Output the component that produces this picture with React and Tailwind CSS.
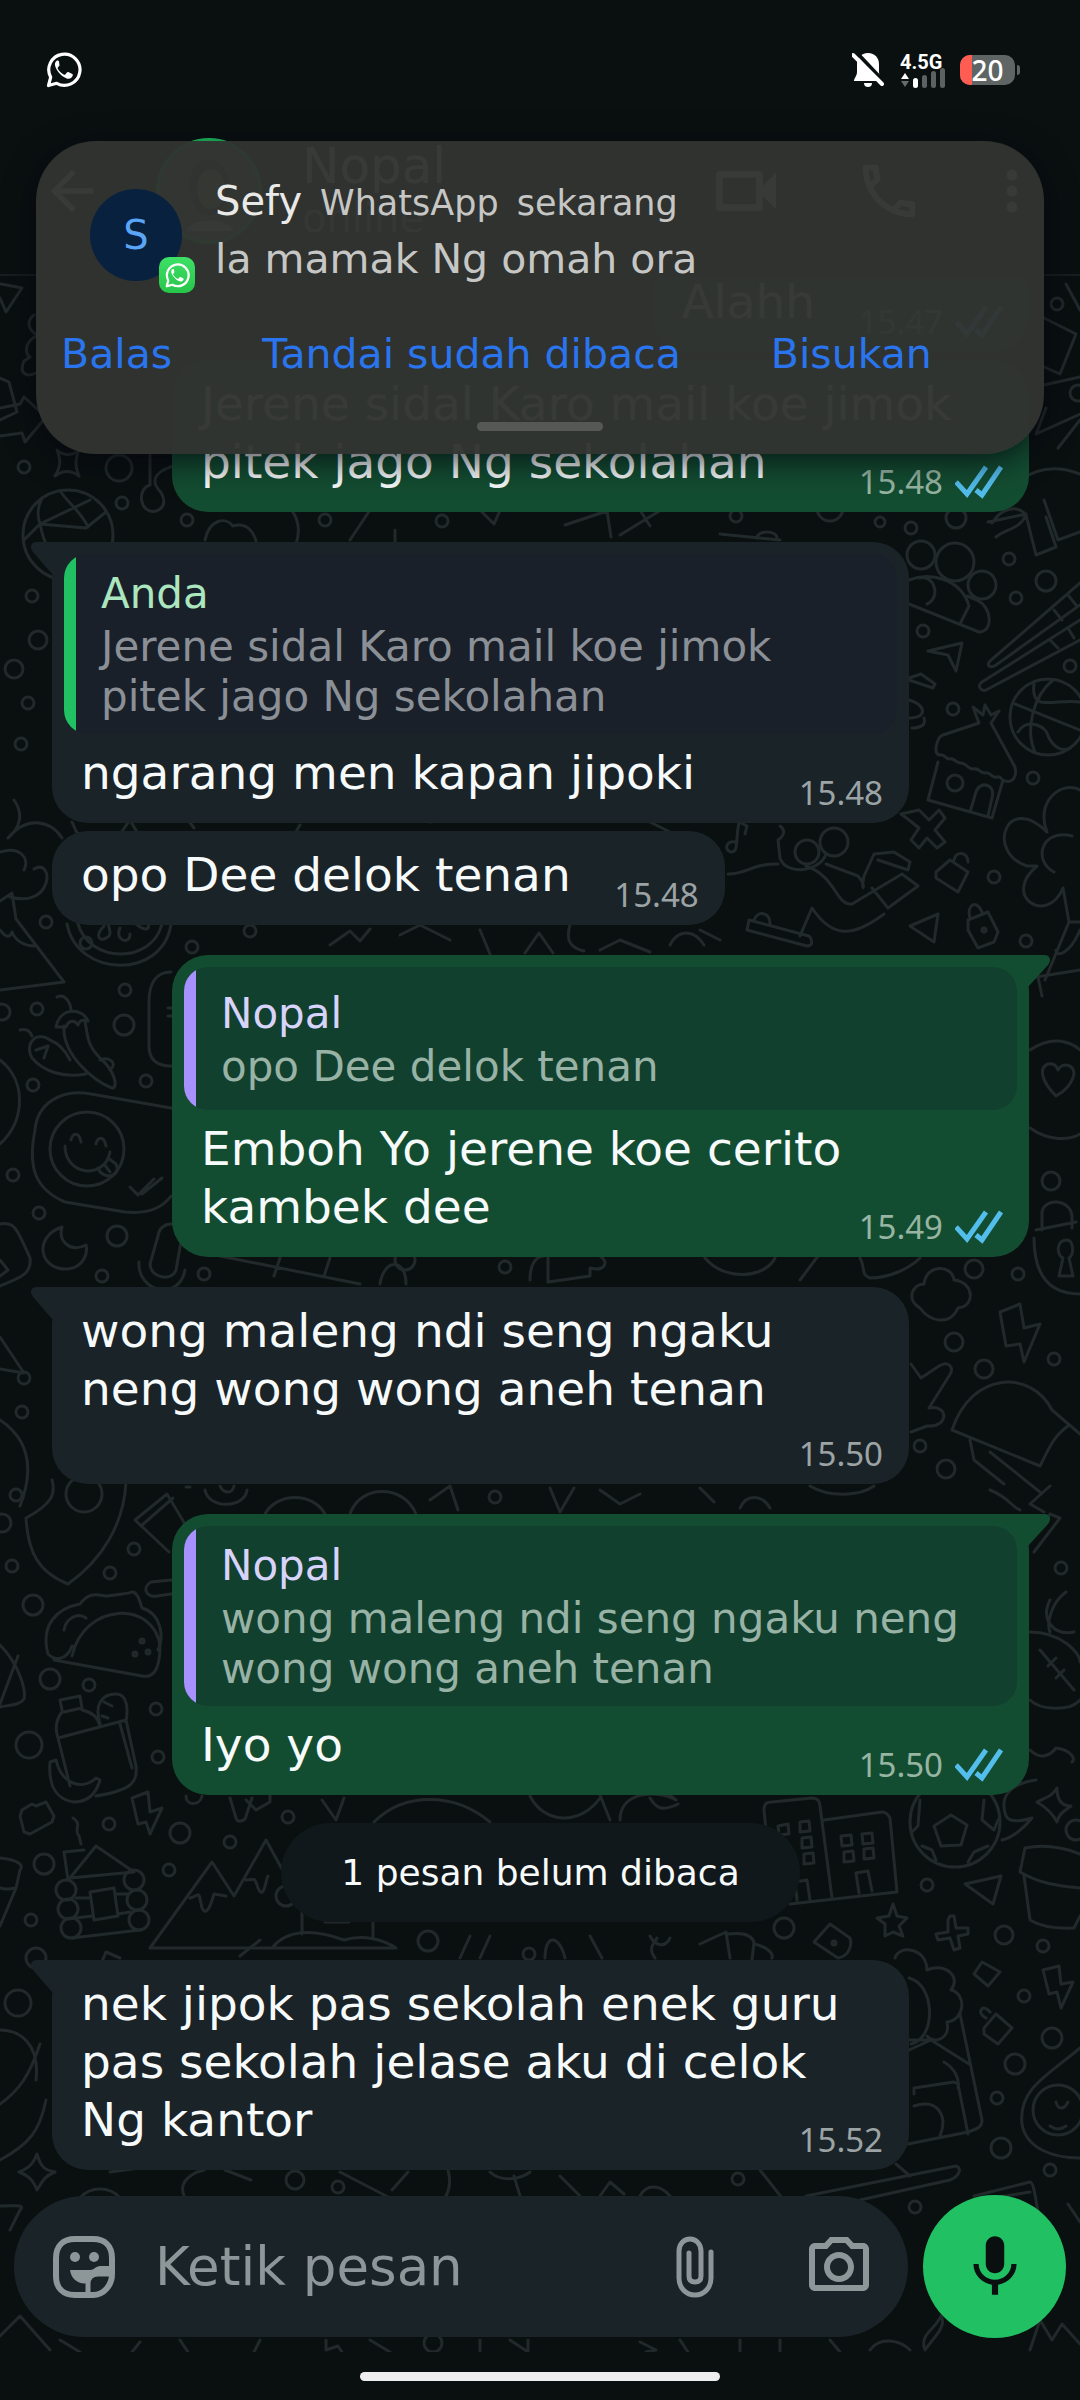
import React, { useState } from "react";
import { MdOutlinePhotoCamera, MdMic, MdOutlineVideocam, MdOutlineCall, MdMoreVert, MdArrowBack } from "react-icons/md";

// small bubbles scattered over the wallpaper: x, y, radius
const dots = [
  [24, 467, 6], [119, 468, 13], [122, 503, 6], [187, 520, 6], [325, 520, 6], [442, 521, 6], [1057, 304, 6], [1078, 393, 8],
  [736, 516, 6], [830, 508, 13], [880, 522, 5], [911, 528, 6], [956, 518, 10], [921, 555, 14], [955, 562, 19], [982, 585, 14],
  [1009, 559, 6], [1046, 581, 10], [1016, 598, 6], [923, 631, 6], [953, 709, 6], [1070, 666, 6], [955, 783, 8], [1033, 778, 6],
  [994, 877, 6], [1026, 941, 6], [807, 852, 12], [32, 596, 6], [38, 640, 9], [14, 669, 9], [28, 703, 6], [21, 744, 6],
  [46, 922, 6], [86, 943, 6], [125, 990, 6], [124, 1025, 10], [37, 1009, 6], [2, 1012, 8], [33, 1085, 6], [146, 1081, 6],
  [13, 1175, 6], [39, 1213, 6], [117, 1236, 10], [102, 1276, 6], [204, 1274, 6], [192, 947, 6], [250, 931, 6], [505, 1267, 6],
  [1051, 1181, 9], [974, 1269, 9], [1018, 1274, 6], [954, 1342, 9], [1054, 1359, 6], [984, 1369, 9], [920, 1446, 6], [946, 1469, 9],
  [24, 1378, 6], [22, 1412, 6], [16, 1495, 6], [2, 1523, 9], [12, 1566, 6], [84, 1494, 18], [134, 1549, 6], [110, 1573, 6],
  [33, 1605, 10], [50, 1679, 10], [89, 1685, 6], [29, 1745, 13], [156, 1709, 6], [158, 1757, 6], [109, 1824, 6], [180, 1833, 10],
  [230, 1842, 6], [288, 1817, 6], [44, 1864, 10], [169, 1870, 6], [31, 1920, 6], [286, 1896, 10], [1061, 1568, 6], [495, 1497, 6],
  [927, 1885, 6], [784, 1928, 10], [1004, 1935, 9], [1043, 1946, 6], [1024, 1996, 6], [1052, 2038, 10], [1015, 2064, 10],
  [997, 2098, 6], [1001, 2148, 10], [1050, 2170, 6], [738, 2179, 6], [915, 2207, 6], [1076, 1830, 10], [18, 2003, 13],
  [295, 2180, 9], [338, 2187, 6], [428, 1941, 10], [529, 1954, 6], [433, 2343, 9], [405, 1260, 10], [36, 1958, 10],
  // ends of the logs of the cabin
  [66, 1890, 10], [68, 1909, 10], [71, 1928, 10], [134, 1880, 10], [137, 1900, 10], [139, 1920, 10],
];

function Wallpaper() {
  return (
    <svg
      aria-hidden="true"
      viewBox="0 276 1080 2076"
      preserveAspectRatio="xMidYMin slice"
      className="absolute inset-0 h-full w-full"
      fill="none"
      stroke="#22292a"
      strokeWidth="3"
      strokeLinecap="round"
      strokeLinejoin="round"
    >
      {dots.map(([x, y, r]) => (
        <circle key={`${x}-${y}`} cx={x} cy={y} r={r} />
      ))}
      {/* paper planes, stars and cups near the top */}
      <path d="M-4 283l26 5-16 24-6-14M34 315c-8 6-6 16 4 20-16 8-12 20-8 22l-6 4c-6 14 4 16 12 12M0 378l9 4 8 30-17 8M0 408l20-4 4-7 22 20-21 25-3-9-22 3M57 450c6 6 16 6 22 0-4 10-4 16 0 26-8-6-16-6-24 0 6-10 6-16 2-26z" />
      <path d="M150 455v30c-14 4-10 30 6 26 12-4 8-16 2-22-8-10 0-20 20-24" />
      <circle cx="68" cy="535" r="45" />
      <path d="M42 498c-6 12-4 20-2 26l50-24M24 540l16-16 46 4 20-16M60 491c10 14 22 22 28 36M40 524c4 20 10 30 20 40" />
      <path d="M205 540c4-20 20-24 28-14 14-4 22 6 24 20M290 508c10 12 10 24 6 36M350 540l20-30M480 510l14 14 8-18M395 530v20M620 535l46-28M565 525l42-14 4 26M640 510l10 16M720 534l60 6M757 538c0-8 20-8 20 0" />
      <path d="M1066 284l14 26M1044 318l32 16-16 40-18-8M1044 385l36-8M1046 408l-10 26 44-20M1058 448l22-28M1020 480c20-14 40-14 60-6M992 523c10-16 26-18 34-8-6 14-20 14-30 22M988 522l38-8M1026 515l10 40 20-8-10-30M1044 500l14 40 22-8" />
      {/* whisk, hut and ball */}
      <path d="M909 580c20-8 52-2 60 26M909 604l70 28c14 0 14-24-2-32l-10-4M969 606l-8 16M919 578c16-4 22 20 8 26M1080 583l-90 78c-4 4 0 8 6 4l84-60M1080 620l-98 62c-6 4 0 10 4 8l94-50M1054 610l8 10M1068 595l8 10M1050 640l8 8M1068 628l6 10" />
      <path d="M928 651l34-8-6 28-8-16zM909 678l12-4 14 10-2 4-24-8M909 700c16 4 20 18 0 18M912 728c10 0 14-4 12-10" />
      <path d="M979 723l-6-16 10 8 2-10 6 10 8-4-8 12 24 44c2 10-2 16-10 14-4 0-4-6-8-4-6 2-6-6-12-4-6 0-6-6-12-4-6 0-6-6-12-6-6 0-6-6-12-4-4 0-4-6-10-4-6-2-2-18 4-20zM938 762l-10 38 64 18 11-38M970 812l6-20c4-12 20-8 16 6l-4 18" />
      <circle cx="1048" cy="717" r="38" />
      <path d="M1015 704l65 26M1053 680c-20 16-28 50-18 72M1034 684c-4 30 22 14 46 18M1018 732c10-16 30-4 30 4 6 12 14 16 22 12" />
      <path d="M909 820l-8-6 18-4 10 10 10-10 6 8-10 12 10 12-8 6-10-10-8 10-8-8 8-12-10-8M735 842c-8-2-12 8-4 10 8 0 4-10 8-30l8 4-2 8M780 826c6 4 4 10-2 14l2 18c6 18 40 14 46-4M728 874c20 0 22-10 50-10M826 864l32 12c10 10 2 20 6 0l10-22 20-2 16 10-2 8-30-10M806 866c30 10 30 40 46 38l50-30 16 12-30 22-16-20M800 936l12-28c20 30 40 30 72 6M747 930l60 16c6 0 6-6 2-10l-60-16zM754 920c4-10 16-8 16 4" />
      <circle cx="834" cy="842" r="14" />
      <path d="M936 872l14-12 18 12-10 20-22-14zM954 860c2-10 14-8 14 2M910 926l28-12-4 28zM968 920l20-8 10 20-4 10-16 6-10-18zM970 918c-4-12 6-20 12-6" />
      <circle cx="984" cy="930" r="2" />
      <path d="M1047 832c-40-40-62 20-20 34l10 0c-36 30 10 60 26 22M1047 832c-12-30 14-52 33-42M1072 836c-30-8-40 24-18 36M1063 888l6 34-24 58M1069 922h11M1056 950c0 8 14 4 24-20" />
      {/* left side: flower, citrus, pizza, chillies */}
      <path d="M14 800c10 14 6 28-6 38 20-24 44-16 54 0M0 852c20-6 30 6 24 18M34 869c20-12 20 40-24 28M0 901l12-8 4 26M16 919l48 63-64 8M0 930c6 8 10 8 12 2 4 10 14 14 22 14" />
      <path d="M67 924c10 54 96 56 104 0M78 924c12 40 74 40 84 0M104 926c-10 10-4 16 2 12 6-2 4-8 2-14M120 928c-6 12 10 18 10 6M136 924c10 8 14 6 12-2" />
      <path d="M57 997c8-4 14 6 14 14M56 1027c4-20 26-20 32-6-8-2-8 0-10 4-4-6-10-4-12 2zM64 1026c-2 30 32 56 48 62 6 0 4-16-12-30-14-14-12-24-15-36M20 1030c8-2 10 2 12 6M50 1040c-14-10-26 4-18 18 12 14 32 20 54 16M50 1040c10 4 16 12 20 20M36 1050l12-4-4 12M100 1060c10-4 18 4 10 10" />
      <path d="M171 972c-14 0-22 10-22 30v44c0 14 8 20 22 20M168 1008h4M168 1016h4" />
      <circle cx="87" cy="1149" r="37" />
      <path d="M171 1108l-80-14c-30-6-54 10-56 36-8 40 2 60 30 72l60 10c20 2 36-2 46-16M71 1140c2-8 8-8 10 2M96 1144c2-8 8-8 10 2M65 1146c0 30 40 34 45 6M98 1168c4 12 24 10 18-4l-8-6M104 1164l6 8M130 1187l8 8 16-16M142 1194l20-16" />
      <path d="M62 1227c-30 10-22 44 6 42 16-2 20-16 18-24-16 8-28-4-24-18zM0 1224c14-2 16 2 30 34 2 16-10 20-30 28M0 1260l8 10-8 6M158 1236c2-16 24-16 24 0l-6 34c-4 12-26 8-26-6zM139 1262c-2 30 40 40 46 8M0 1060c26 20 26 60 0 84" />
      {/* between the bubbles */}
      <path d="M72 822c4 8 4 12 8 12M120 834l10-14 8 14M188 820l6 8M300 825l-6 10M430 822l60-8M515 835h60M650 822l20 10M330 945l20-14 10 10 10-12M400 935l20-10 30 15M480 930l10 24M525 953l14-20 14 20M570 925c-6 20 6 24 14 26M600 950l20-10 30 12M670 945c8-16 24-16 34 0M700 930l20 10" />
      <path d="M220 1256l140 28M280 1258l-6 18M330 1258l-6 18M380 1284c4-26 26-26 26 0M530 1280c0-16 6-24 14-24M548 1258v24l42-6v-8c14 4 20-6 10-12M705 1258c20 24 60 20 70 0M800 1280l18-24M860 1258c6 10 0 16 10 20 20 0 40-10 50-20" />
      <path d="M190 1487l-4 0M205 1490c4 20 40 18 42 0M220 1486c4 8 12 8 14 0M265 1514c12-22 48-22 60 0M350 1514c10-30 54-30 66 0M430 1500l20-14 8 24M550 1488l10 24 14-24M600 1490l20 14 20-10M700 1488l14 14M740 1508c6-14 22-14 30 0M810 1486c20 12 50 10 64 0" />
      {/* right side: heart, lock, cloud, bolt, mushroom */}
      <path d="M1030 1050c30-20 50 0 50 0M1030 1128c20 14 40 12 50 6M1056 1096c-14-14-18-28-8-32 8-2 10 6 10 6 4-8 16-6 16 4-2 10-10 18-18 22zM1042 1230v-18c2-14 28-14 30 4v12M1036 1230l40-8M1034 1238c0 30 10 56 46 56" />
      <path d="M1030 978l50-8M1034 958l8 38M1067 1240c-12 0-10 16-4 18l-4 18h14l-4-18c6-4 4-18-2-18" />
      <path d="M920 1308c-14-8-8-24 4-24 2-20 28-20 30-4 20 2 22 26 4 28-8 18-28 14-38 0zM1000 1312l20-8 4 24 16-4-16 38-4-18-14 2zM911 1364l10 14 18-12c10-6 16 2 10 10l-20 32c20-4 20 20-2 18l-16 6M952 1430c20-60 80-60 100-20l28 24M952 1430l88 36c10-20 14-30 28-40M970 1440l4 20 30 24M990 1452l50 40" />
      <path d="M0 1337l24 36-24-4M0 1420c30 20 34 50 20 86M52 1480c4 14 0 24-26 38 2 34 12 54 42 66 34-24 56-60 58-102M135 1520l32-26 18 30M135 1520l34 32M141 1526l32-28" />
      <path d="M171 1580l-20 2c-10 6-4 16 6 14l14-2M48 1654c-8-30 10-46 32-50 10-14 20-8 28-8 10-2 20-2 24-4 6 0 8 10 10 16 20 6 22 30 16 42M54 1660l88 16c10 2 18-4 18-30-6-46-76-44-88 10M48 1654c6 6 18 8 24-8M64 1630c2-12 14-18 22-12" />
      <circle cx="142" cy="1641" r="2" /><circle cx="135" cy="1654" r="2" /><circle cx="148" cy="1652" r="2" />
      <path d="M0 1645c20 20 26 46 24 54-4 6-14 6-24 8M0 1704l18-48M62 1710l-2-10 20-4 2 12-18 4M62 1712c-8 10-6 20-4 26l12 48M82 1710c10 2 16 8 18 16M58 1738l68-18 10 46c2 16-4 24-40 30M120 1724l12 44M100 1724c-6-20 2-30 16-30 12 0 12 16 10 28M104 1702l8 4M102 1716l6 2M50 1762l6-2c6 26 28 30 40 18l4 2c-4 14-12 22-26 22-16-2-26-14-24-40z" />
      <path d="M132 1798l16-6 2 20 12-4-12 26-4-12-8 2zM20 1816l2-6 10-6 4 2 10-4 8 14-2 6-22 12-6-2zM73 1818c10 6 0 12 6 18l2 8M68 1880l-4-28 20-2M70 1878l26-32 38 26zM76 1898h14M76 1918l16-2M116 1894h12M118 1914l12-2M90 1892l24-4 4 28-24 4zM72 1938l68-8M0 1858c20 2 24 8 20 12l-4 18c-10 2-16 0-16 0M16 1888l-16 38" />
      <path d="M150 1948l62-86 22 34 32-56 22 40M190 1898c10-2 8-10 12 10 4 8 8 0 12-14l12 2M246 1880c10 0 8-4 12 8 6 14 8-10 10-12M150 1948h246M272 1948c14-18 40-20 72-8 20-6 40 0 52 8M302 1910v24M373 1920v18M325 1922h24" />
      <path d="M186 1796c0 10 14 10 16 0M230 1798l6 20c2 6 10 2 10-2l6-18M246 1800l10 10 14-8v-8M322 1800l14 20 8-22M374 1822c30-30 80-30 116 0M530 1796c14 28 50 30 70 2M610 1820l-12-30M620 1820c0-30 40-30 56-20l-10-8M650 1798c6 10 12 14 28 6" />
      {/* buildings and football */}
      <path d="M766 1830l-2-20c0-6 2-8 8-8l40-4c6 0 8 4 8 8l12 92M824 1820l58-8c4 0 6 2 8 6l7 74-107 12M778 1826l10-2 1 10-10 1zM800 1822l9-1 1 10-10 1zM802 1838l9-1 1 10-10 1zM804 1854l9-1 1 10-10 1zM841 1836l10-1 1 10-10 1zM862 1834l10-1 1 10-10 1zM844 1852l9-1 1 10-10 1zM864 1849l9-1 1 10-10 1zM859 1893l-3-20 12-2 4 20M797 1900l-2-18 12-2 3 20" />
      <circle cx="955" cy="1822" r="45" />
      <path d="M951 1815l16 10-6 20-20 1-7-20zM920 1800l-2 26-6 6M984 1800l-2 20 12 10 4-10M922 1846l10 4 4 10M988 1846l-14 6-6 10" />
      <path d="M1036 1780c-30 4-36 20-30 36 4 8 20 4 26 2-8 10-20 20-30 22M1037 1802c6-4 14-4 20-14 0 14 6 18 14 18-8 6-12 8-14 16-4-8-10-14-20-20zM1030 1750c10 10 20 6 26-2 16 2 20 12 16 14M1025 1848c20-4 40 0 55 6M1025 1848l-5 24c20 12 40 14 60 16M1024 1876l6 44c16 10 40 8 44 8l6-12M965 1884l36-8-8 28z" />
      <path d="M893 1904l4 12 10 2-8 8 4 10-10-4-8 4 0-12-8-6 12-2zM948 1920l2-4 4 0 2 12 12 0 0 6-10 2 2 12-6 2-4-12-12 2-2-6 12-2zM830 1924l-16 18 24 16c12-2 14-14 12-20z" />
      <circle cx="834" cy="1943" r="2" />
      <path d="M700 1944l26-12 4 26M728 1934c16-2 24 2 26 8l-2 18M754 1944c10 2 20 8 18 14M895 1958c4-14 32-10 32 12 20-8 34 8 24 20 16 4 14 30-4 32 4 18-14 22-20 14M909 1978c26 6 28 60 2 66M909 2050l22-10 38 24M931 2040l-22 0M960 2014l22 106c0 6-2 8-14 12l-60 12M914 2094v-6l40-6 4 2 10 50M914 2106c24-8 34 10 26 30M944 2062c10 6 16 16 14 26" />
      <path d="M982 1962l18 10-12 14-14-12zM1043 1970l16-4 2 18 12-2-12 26-4-16-8 2zM984 2028l12-14 16 14-14 16-14-10zM986 2018c-10-4-4-16 4-6M1080 2048c-30 26-62 40-58 76 4 24 30 34 58 34" />
      <circle cx="1058" cy="2110" r="25" />
      <path d="M1050 2126c6 4 10 4 16 0M1056 2102c2 8 8 8 12 0" />
      <path d="M760 2170l22 28M896 2164l14 12M806 2196l150-30c6 2 4 10-6 14l-90 20M974 2196l56-14c4 0 6 20 8 30M980 2200l50-8M1068 2204l12 18M0 2104c20-14 30-30 40-60M0 2030c20 0 40 14 36 50M0 2160c30-16 40-30 46-60M37 2154c4 14 8 16 18 18-10 4-12 8-18 18-4-10-8-14-18-18 10-4 14-8 18-18zM0 2206c14 0 26-2 20 4l-10 20" />
      <path d="M110 2172l30-4M184 2196c-8-20 20-26 20-26M225 2170l26 10M340 2172l50 26M392 2190l16-18M448 2170c4 14 0 22-2 26M490 2172c10 10 30 8 40 0M520 2196l-6-20M560 2176l20 20M600 2196l10-14 14 12M640 2196c6-12 20-12 30 0M80 2198c10-12 30-12 40 0" />
      <path d="M0 2336l20-20 30 34M60 2340l20 12M140 2342l-8 10M180 2340l8 12M260 2340l-6 12M326 2340v10l12-4 4 6M370 2340l20 12M480 2340v12M510 2340l18 12v-12M640 2342l16 8-10 2M680 2340l8 12M740 2340v12M780 2340v12M830 2340l10 12M870 2350c10-14 30-10 40 0M925 2350c-6-16 10-20 16-34 6 10-6 20-16 34M1030 2350l10-30 12 20 10-16 18 20" />
      <path d="M1050 1600c-10 20 4 36 24 32M1066 1592c-14 10-20 30-16 40M1030 1632c30 0 50 20 50 30M1030 1700c10 10 40 12 50 0M1040 1650l34 40M1048 1666l8-8M1056 1678l8-8M1030 1540l20-26 10 4-26 34M990 1490c20 8 20 16 30 20M1050 1486l-20 18 14 8" />
      <path d="M100 1966l6-14 14 6M240 1956l20-16M460 1958l10-22M480 1958l10-22M545 1958c0-24 14-24 20 0M590 1936l12 22M650 1936c4 8 14 14 20 2M655 1958c-8-10 0-16 2-20" />
    </svg>
  );
}

function Ticks() {
  return (
    <svg viewBox="0 0 48 34" className="h-[34px] w-12 shrink-0" fill="none" stroke="#53bdeb" strokeWidth="5" aria-label="Dibaca">
      <path d="M1 17l11 12L31 2M21 25l6 5L46 2" />
    </svg>
  );
}

function WhatsAppGlyph({ className }) {
  return (
    <svg viewBox="0 0 36 36" className={className} fill="none" aria-hidden="true">
      <path d="M2.500 33.500l2.200-8.300A15.600 15.600 0 1 1 10.700 31.300z" stroke="currentColor" strokeWidth="3.200" strokeLinejoin="round" />
      <path
        fill="currentColor"
        d="M13 9.500c-.5-1-1.300-1-2-.9-2.200 1.200-2.500 4-1.600 6.200 2 5.200 6.100 9.600 11.300 11.600 2.700.9 5-.2 5.900-2.300.3-1.100.3-1.700-.3-2l-4-2c-.6-.2-1 0-1.400.4l-1.600 2c-.4.4-.8.4-1.200.2-2.900-1.400-5-3.500-6.400-6.200-.2-.5 0-.9.300-1.200l1.300-1.600c.3-.4.3-.8.100-1.300z"
      />
    </svg>
  );
}

function Tail({ sent }) {
  return sent ? (
    <svg viewBox="0 0 60 36" className="absolute top-0 -right-[21px] h-9 w-[60px] text-[#134d31]" fill="currentColor" aria-hidden="true">
      <path d="M0 0h54c6 0 8 5 4 10L38 32 30 36H0z" />
    </svg>
  ) : (
    <svg viewBox="0 0 60 36" className="absolute top-0 -left-[21px] h-9 w-[60px] text-[#1a2328]" fill="currentColor" aria-hidden="true">
      <path d="M60 0H6C0 0-2 5 2 10l19 22 9 4h30z" />
    </svg>
  );
}

function Bubble({ sent, tail, fit, below, quote, text, time }) {
  // the time shares the last line of the text, unless that line is too long for it
  const textSpace = below ? "pb-4" : `pb-[21px] [grid-area:1/1] ${fit ? (sent ? "pr-[188px]" : "pr-32") : ""}`;

  return (
    <article
      className={`relative rounded-[36px] ${sent ? "self-end bg-[#134d31]" : "self-start bg-[#1a2328]"} ${
        fit ? "w-fit" : "w-[calc(100%-120px)]"
      } ${tail ? "mt-[30px]" : "mt-2"}`}
    >
      {tail && <Tail sent={sent} />}
      {quote && (
        <div className="relative px-3 pt-3">
          <blockquote
            className={`relative flex min-h-[143px] flex-col justify-center overflow-hidden rounded-3xl py-3 pl-[37px] ${
              sent ? "bg-[#12402f]" : "bg-[#1a202a]"
            }`}
          >
            <span className={`absolute inset-y-0 left-0 w-3 ${sent ? "bg-[#a791ff]" : "bg-[#21c063]"}`} />
            <cite className={`text-[42px] leading-[56px] not-italic ${sent ? "text-[#d8d3fb]" : "text-[#abe6bf]"}`}>
              {quote.name}
            </cite>
            <p className={`text-[42px] leading-[50px] whitespace-pre-line ${sent ? "text-[#98b3a5]" : "text-[#8b9097]"}`}>
              {quote.text}
            </p>
          </blockquote>
        </div>
      )}
      <div className={`relative grid pr-[26px] pl-[29px] ${quote ? "pt-2.5" : "pt-[15px]"}`}>
        <p className={`text-[47px] leading-[58px] whitespace-pre-line text-[#f7fafa] ${textSpace}`}>{text}</p>
        <div className={`flex items-center gap-3 self-end justify-self-end pb-2.5 ${below ? "" : "[grid-area:1/1]"}`}>
          <time className={`font-['Noto_Sans'] text-[33px] leading-10 ${sent ? "text-[#97b5a2]" : "text-[#9ca3a5]"}`}>{time}</time>
          {sent && <Ticks />}
        </div>
      </div>
    </article>
  );
}

function StatusBar() {
  return (
    <div className="relative flex h-[108px] shrink-0 items-center pt-8 pr-[60px] pl-[46px] text-white">
      <WhatsAppGlyph className="h-9 w-9" />
      <div className="ml-auto flex items-center">
        <svg viewBox="0 0 32 36" className="h-9 w-8" aria-hidden="true">
          <path fill="#fff" d="M16 1c7 0 11 5 11 11v8c0 4 3 6 3 9H2c0-3 3-5 3-9v-8C5 6 9 1 16 1zM12 31h8c0 3-2 4-4 4s-4-1-4-4z" />
          <path d="M3-1l29 31" stroke="#0a1010" strokeWidth="4" />
          <path d="M1 3l29 29" stroke="#fff" strokeWidth="4" strokeLinecap="round" />
        </svg>
        <div className="ml-4 flex w-12 flex-col">
          <span className="font-['Roboto'] text-[20px] leading-5 font-bold">4.5G</span>
          <svg viewBox="0 0 46 20" className="-mt-1 h-5 w-[46px]" aria-hidden="true">
            <path d="M1 11l4-6 4 6z" fill="#fff" />
            <path d="M1 13l4 6 4-6z" fill="#666b6b" />
            <rect x="13" y="10" width="5" height="10" rx="2.500" fill="#fff" />
            <rect x="22" y="7" width="5" height="13" rx="2.500" fill="#5c6162" />
            <rect x="31" y="3" width="5" height="17" rx="2.500" fill="#5c6162" />
            <rect x="40" y="0" width="5" height="20" rx="2.500" fill="#5c6162" />
          </svg>
        </div>
        <div className="ml-3 flex items-center gap-0.5">
          <div className="relative flex h-[30px] w-[55px] items-center justify-center rounded-[10px] bg-[#5f6565]">
            <span className="absolute inset-y-0 left-0 w-3 rounded-l-[10px] bg-[#ff5d52]" />
            <span className="relative font-['Noto_Sans'] text-[28px] leading-[30px] font-medium">20</span>
          </div>
          <span className="h-2.5 w-[3px] rounded-r bg-[#5f6565]" />
        </div>
      </div>
    </div>
  );
}

function ChatHeader() {
  return (
    <header className="flex h-[168px] shrink-0 items-center border-b-2 border-[#171e1f] pr-9 pl-10 text-white">
      <button aria-label="Kembali">
        <MdArrowBack className="h-16 w-16" />
      </button>
      <div className="ml-[52px] flex h-[106px] w-[106px] items-center justify-center rounded-full border-4 border-[#21c063] bg-[#5d6a52]">
        <svg viewBox="0 0 60 80" className="h-20 w-[60px]" aria-hidden="true">
          <ellipse cx="30" cy="36" rx="20" ry="28" fill="#2b2522" />
          <ellipse cx="32" cy="38" rx="14" ry="20" fill="#c79a82" />
          <path d="M8 80c2-14 44-14 46 0z" fill="#dddddd" />
        </svg>
      </div>
      <div className="ml-10 flex flex-1 flex-col">
        <h1 className="text-[50px] leading-[54px]">Nopal</h1>
        <p className="text-[40px] leading-[50px] text-[#9ca3a5]">online</p>
      </div>
      <div className="flex items-center">
        <button aria-label="Panggilan video">
          <MdOutlineVideocam className="h-20 w-20" />
        </button>
        <button aria-label="Panggilan suara" className="ml-[68px]">
          <MdOutlineCall className="h-[70px] w-[70px]" />
        </button>
        <button aria-label="Menu" className="ml-14">
          <MdMoreVert className="h-16 w-16" />
        </button>
      </div>
    </header>
  );
}

function Notification() {
  return (
    <section
      role="alert"
      className="absolute inset-x-9 top-[141px] z-20 flex flex-col rounded-[60px] bg-[#313431]/97 pt-8 pb-[23px] shadow-[0_8px_32px_rgba(4,6,16,0.7)]"
    >
      <div className="flex pl-[54px]">
        <div className="relative mt-4 mr-[33px] h-[92px] w-[92px] rounded-full bg-[#08213f] text-center text-[40px] leading-[92px] text-[#5aa5f5]">
          S
          <span className="absolute -right-[13px] -bottom-3 flex h-9 w-9 items-center justify-center rounded-[10px] bg-gradient-to-b from-[#3ee066] to-[#27c54a] text-white">
            <WhatsAppGlyph className="h-[25px] w-[25px]" />
          </span>
        </div>
        <div>
          <div className="flex items-baseline gap-[18px] text-[35px] leading-[56px] text-[#c6c7c5]">
            <strong className="text-[40px] font-normal text-[#e9eae8]">Sefy</strong>
            <span>WhatsApp</span>
            <span>sekarang</span>
          </div>
          <p className="text-[41px] leading-[56px] text-[#c6c7c5]">la mamak Ng omah ora</p>
        </div>
      </div>
      <div className="mt-[42px] flex gap-[90px] px-[25px] text-[41px] leading-[50px] text-[#2a75ee]">
        <button>Balas</button>
        <button>Tandai sudah dibaca</button>
        <button>Bisukan</button>
      </div>
      <span className="mt-[43px] h-[9px] w-[126px] self-center rounded-full bg-[#565855]" />
    </section>
  );
}

function Composer() {
  const [message, setMessage] = useState("");

  return (
    <form className="relative mt-[25px] mb-[14px] flex shrink-0 items-center gap-[15px] px-3.5" onSubmit={(e) => e.preventDefault()}>
      <div className="flex h-[141px] min-w-0 flex-1 items-center rounded-full bg-[#1a2328] pr-[33px] pl-[39px] text-[#8d9699]">
        <button type="button" aria-label="Stiker" className="shrink-0">
          <svg viewBox="0 0 62 62" className="h-[62px] w-[62px]" fill="none">
            <path d="M22 3h18c12 0 19 7 19 19v16c0 11-8 21-19 21H22C10 59 3 52 3 40V22C3 10 10 3 22 3z" stroke="currentColor" strokeWidth="6" strokeLinejoin="round" />
            <path d="M35 58V48c0-6 4-10 10-10h14" stroke="currentColor" strokeWidth="5" />
            <circle cx="22" cy="21" r="5" fill="currentColor" />
            <circle cx="41" cy="21" r="5" fill="currentColor" />
            <path d="M17 34h20c4 0 6-4 10-4h12v8H45c-6 0-10 4-10 9-9 2-17-4-18-13z" fill="currentColor" />
          </svg>
        </button>
        <input
          type="text"
          aria-label="Ketik pesan"
          placeholder="Ketik pesan"
          value={message}
          onChange={(e) => setMessage(e.target.value)}
          className="ml-10 min-w-0 flex-1 bg-transparent text-[53px] leading-[64px] text-white outline-none placeholder:text-[#8d9699]"
        />
        <button type="button" aria-label="Lampirkan" className="shrink-0">
          <svg viewBox="0 0 40 62" className="h-[62px] w-10" fill="none" stroke="currentColor" strokeWidth="5" strokeLinecap="round">
            <path d="M36 16v26c0 10-7 17-16 17S4 52 4 42V15C4 8 9 3 15 3s11 5 11 12v25c0 4-2 6-6 6s-6-2-6-6V17" />
          </svg>
        </button>
        <button type="button" aria-label="Kamera" className="ml-[88px] shrink-0">
          <MdOutlinePhotoCamera className="h-[72px] w-[72px]" />
        </button>
      </div>
      <button type="button" aria-label="Pesan suara" className="flex h-[143px] w-[143px] shrink-0 items-center justify-center rounded-full bg-[#21c063] text-[#0a1010]">
        <MdMic className="h-[74px] w-[74px]" />
      </button>
    </form>
  );
}

export default function App() {
  return (
    <div className="relative flex h-screen flex-col overflow-hidden bg-[#0a1010] font-['DejaVu_Sans',sans-serif]">
      <StatusBar />
      <ChatHeader />
      <Notification />

      <main className="relative flex min-h-0 flex-1 flex-col overflow-hidden">
        <Wallpaper />
        <div className="relative flex min-h-0 flex-1 flex-col justify-end pr-[51px] pl-[52px]">
          <Bubble sent fit text="Alahh" time="15.47" />
          <Bubble sent text={"Jerene sidal Karo mail koe jimok\npitek jago Ng sekolahan"} time="15.48" />
          <Bubble
            tail
            quote={{ name: "Anda", text: "Jerene sidal Karo mail koe jimok\npitek jago Ng sekolahan" }}
            text="ngarang men kapan jipoki"
            time="15.48"
          />
          <Bubble fit text="opo Dee delok tenan" time="15.48" />
          <Bubble
            sent
            tail
            quote={{ name: "Nopal", text: "opo Dee delok tenan" }}
            text={"Emboh Yo jerene koe cerito\nkambek dee"}
            time="15.49"
          />
          <Bubble tail below text={"wong maleng ndi seng ngaku\nneng wong wong aneh tenan"} time="15.50" />
          <Bubble
            sent
            tail
            quote={{ name: "Nopal", text: "wong maleng ndi seng ngaku neng\nwong wong aneh tenan" }}
            text="Iyo yo"
            time="15.50"
          />
          <div className="mt-7 mb-2 self-center rounded-full bg-[#11181b] px-[60px] py-6 text-[36px] leading-[51px] text-[#f7fafa]">
            1 pesan belum dibaca
          </div>
          <Bubble tail text={"nek jipok pas sekolah enek guru\npas sekolah jelase aku di celok\nNg kantor"} time="15.52" />
        </div>
        <Composer />
      </main>

      <div className="flex h-12 shrink-0 items-center justify-center">
        <span className="h-[9px] w-1/3 rounded-full bg-[#eeeeee]" />
      </div>
    </div>
  );
}
